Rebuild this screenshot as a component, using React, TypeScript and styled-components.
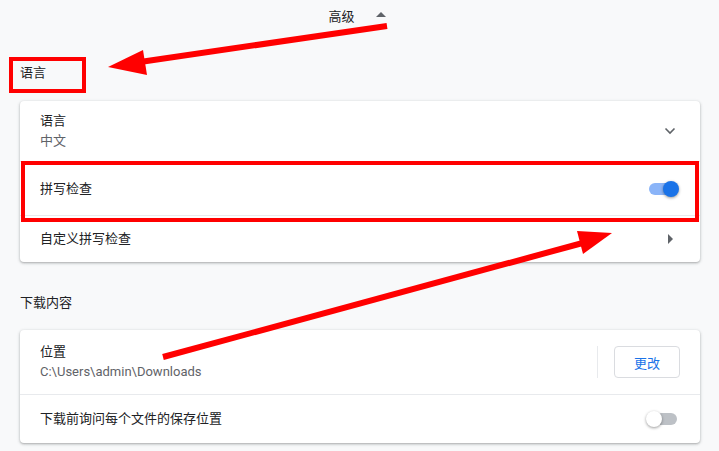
import styled, { createGlobalStyle } from "styled-components"

const Global = createGlobalStyle`
    html, body {
        margin: 0;
        background: #f8f9fa;
    }
    body {
        font-family: Roboto, "Noto Sans CJK SC", sans-serif;
        font-size: 13px;
        color: #202124;
    }
`

const Pagina = styled.div`
    position: relative;
    width: 719px;
    height: 451px;
    overflow: hidden;
    padding: 0 19px 0 20px;
    box-sizing: border-box;
`

const Avancado = styled.div`
    display: flex;
    justify-content: center;
    align-items: center;
    gap: 21px;
    height: 31px;
    padding-right: 6px;
`

const SetaCima = styled.span`
    width: 0;
    height: 0;
    border-left: 5px solid transparent;
    border-right: 5px solid transparent;
    border-bottom: 5px solid #5f6368;
    margin-top: -2px;
`

const TituloSecao = styled.h2<{ $topo: number }>`
    margin: ${({ $topo }) => $topo}px 0 0 0;
    font-size: 13px;
    font-weight: 400;
    line-height: 20px;
    height: 28px;
    padding-top: 3px;
    box-sizing: border-box;
`

const Cartao = styled.section<{ $topo: number }>`
    margin-top: ${({ $topo }) => $topo}px;
    background: #fff;
    border-radius: 4px;
    box-shadow: 0 1px 2px rgba(60, 64, 67, 0.3), 0 1px 3px 1px rgba(60, 64, 67, 0.12);
`

const Linha = styled.div<{ $altura: number; $primeira?: boolean }>`
    display: flex;
    align-items: center;
    height: ${({ $altura }) => $altura}px;
    padding: 0 20px;
    border-top: ${({ $primeira }) => ($primeira ? "none" : "1px solid #e8eaed")};
    box-sizing: border-box;
`

const Textos = styled.div`
    flex: 1;
    display: flex;
    flex-direction: column;
    gap: 2px;
    line-height: 18px;
`

const Secundario = styled.span`
    color: #5f6368;
`

const Chave = styled.span<{ $ligada: boolean }>`
    position: relative;
    width: 28px;
    height: 12px;
    border-radius: 6px;
    margin-right: 3px;
    background: ${({ $ligada }) => ($ligada ? "#8ab4f8" : "#bdc1c6")};

    &::after {
        content: "";
        position: absolute;
        top: -2px;
        left: ${({ $ligada }) => ($ligada ? "14px" : "-3px")};
        width: 16px;
        height: 16px;
        border-radius: 50%;
        background: ${({ $ligada }) => ($ligada ? "#1a73e8" : "#fff")};
        box-shadow: 0 1px 3px rgba(0, 0, 0, 0.4);
    }
`

const Icone = styled.span`
    display: flex;
    width: 20px;
    justify-content: center;
    color: #5f6368;
`

const TrianguloDireita = styled.span`
    width: 0;
    height: 0;
    border-top: 5px solid transparent;
    border-bottom: 5px solid transparent;
    border-left: 5px solid #5f6368;
    margin-right: 7px;
`

const Separador = styled.span`
    width: 1px;
    height: 32px;
    background: #e8eaed;
    margin-right: 16px;
`

const Botao = styled.button`
    width: 66px;
    height: 32px;
    border: 1px solid #dadce0;
    border-radius: 4px;
    background: #fff;
    color: #1a73e8;
    font-family: inherit;
    font-size: 13px;
    margin-right: 0;
`

const Anotacao = styled.svg`
    position: absolute;
    left: 0;
    top: 0;
    pointer-events: none;
`

const App = () => {
    return (
        <Pagina>
            <Global />
            <Avancado>
                <span>高级</span>
                <SetaCima />
            </Avancado>

            <TituloSecao $topo={29}>语言</TituloSecao>
            <Cartao $topo={13}>
                <Linha $altura={60} $primeira>
                    <Textos>
                        <span>语言</span>
                        <Secundario>中文</Secundario>
                    </Textos>
                    <Icone>
                        <svg width="12" height="8" viewBox="0 0 12 8">
                            <path d="M1.5 1.5 L6 6 L10.5 1.5" fill="none" stroke="#5f6368" strokeWidth="1.6" />
                        </svg>
                    </Icone>
                </Linha>
                <Linha $altura={54}>
                    <Textos>
                        <span>拼写检查</span>
                    </Textos>
                    <Chave $ligada />
                </Linha>
                <Linha $altura={47}>
                    <Textos>
                        <span>自定义拼写检查</span>
                    </Textos>
                    <TrianguloDireita />
                </Linha>
            </Cartao>

            <TituloSecao $topo={28}>下载内容</TituloSecao>
            <Cartao $topo={12}>
                <Linha $altura={64} $primeira>
                    <Textos>
                        <span>位置</span>
                        <Secundario>C:\Users\admin\Downloads</Secundario>
                    </Textos>
                    <Separador />
                    <Botao>更改</Botao>
                </Linha>
                <Linha $altura={49}>
                    <Textos>
                        <span>下载前询问每个文件的保存位置</span>
                    </Textos>
                    <Chave $ligada={false} />
                </Linha>
            </Cartao>

            {/* marcações vermelhas por cima da tela */}
            <Anotacao width="719" height="451" viewBox="0 0 719 451">
                <rect x="11" y="59" width="73" height="32" fill="none" stroke="#ff0000" strokeWidth="4" />
                <rect x="23" y="163" width="674" height="57" fill="none" stroke="#ff0000" strokeWidth="4" />
                <line x1="387" y1="26" x2="140" y2="62" stroke="#ff0000" strokeWidth="6" />
                <polygon points="108,67 143,50 147,75" fill="#ff0000" />
                <line x1="163" y1="357" x2="590" y2="241" stroke="#ff0000" strokeWidth="6" />
                <polygon points="612,233 577,231 583,254" fill="#ff0000" />
            </Anotacao>
        </Pagina>
    )
}

export default App
